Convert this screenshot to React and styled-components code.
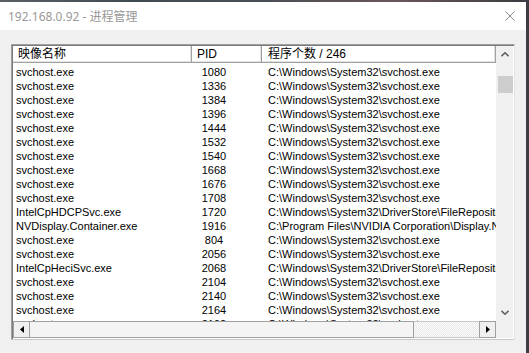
import styled, { createGlobalStyle } from 'styled-components';

const GlobalStyle = createGlobalStyle`
  html, body {
    margin: 0;
    padding: 0;
  }
  body {
    width: 529px;
    height: 353px;
    overflow: hidden;
    font-family: "Liberation Sans", "Noto Sans CJK SC", sans-serif;
  }
`;

const Desktop = styled.div`
  width: 529px;
  height: 353px;
  padding-top: 2px;
  box-sizing: border-box;
  background: linear-gradient(90deg, #5b5f64 0%, #3f4b52 25%, #4a4f56 50%, #6b5559 75%, #3a3d42 100%);
`;

const Window = styled.div`
  width: 526px;
  height: 351px;
  display: flex;
  flex-direction: column;
  background: #f0f0f0;
`;

const TitleBar = styled.div`
  height: 28px;
  flex-shrink: 0;
  background: #fff;
  display: flex;
  align-items: center;
  justify-content: space-between;
  padding: 0 11px 0 8px;
`;

const Title = styled.span`
  font-family: "Noto Sans", "Noto Sans CJK SC", sans-serif;
  font-size: 12px;
  color: #999;
`;

const Body = styled.div`
  padding: 14px 0 0 11px;
`;

const ListView = styled.div`
  width: 504px;
  height: 296px;
  box-sizing: border-box;
  padding: 1px;
  border: 1px solid #a0a0a0;
  border-right-color: #e3e3e3;
  border-bottom-color: #c8c8c8;
  box-shadow: inset 1px 1px 0 #7a7a7a;
  background: #fff;
  display: grid;
  grid-template-columns: 1fr 17px;
  grid-template-rows: 1fr 17px;
`;

const Main = styled.div`
  overflow: hidden;
  display: flex;
  flex-direction: column;
  min-width: 0;
`;

const Header = styled.div`
  display: flex;
  height: 17px;
  flex-shrink: 0;
`;

const HeadCell = styled.div`
  box-sizing: border-box;
  width: ${p => p.$w}px;
  flex: ${p => (p.$w ? '0 0 auto' : '1 1 auto')};
  height: 17px;
  padding-left: ${p => p.$pad}px;
  font-size: 12px;
  line-height: 16px;
  color: #000;
  background: #fff;
  white-space: nowrap;
  border-right: 1px solid #a0a0a0;
  border-bottom: 1px solid #a0a0a0;
  box-shadow: inset -1px -1px 0 #e3e3e3;
`;

const Rows = styled.div`
  padding-top: 2px;
`;

const Row = styled.div`
  display: flex;
  height: 14px;
  font-size: 11px;
  line-height: 14px;
  color: #000;
  white-space: nowrap;
`;

const NameCell = styled.div`
  box-sizing: border-box;
  flex: 0 0 179px;
  padding-left: 3px;
  overflow: hidden;
`;

const PidCell = styled.div`
  box-sizing: border-box;
  flex: 0 0 70px;
  padding-right: 26px;
  text-align: center;
`;

const PathCell = styled.div`
  padding-left: 6px;
`;

const VScroll = styled.div`
  grid-row: 1;
  grid-column: 2;
  background: #f0f0f0;
  display: flex;
  flex-direction: column;
`;

const VButton = styled.div`
  height: 17px;
  flex-shrink: 0;
  display: flex;
  align-items: center;
  justify-content: center;
`;

const VTrack = styled.div`
  flex: 1;
  display: flex;
  flex-direction: column;
  align-items: flex-end;
`;

const VThumb = styled.div`
  margin-top: 13px;
  width: 15px;
  height: 17px;
  background: #cdcdcd;
`;

const HScroll = styled.div`
  grid-row: 2;
  grid-column: 1;
  display: flex;
  background: #f0f0f0;
`;

const HButton = styled.div`
  box-sizing: border-box;
  flex: 0 0 17px;
  height: 17px;
  border: 1px solid #a0a0a0;
  background: #f0f0f0;
  display: flex;
  align-items: center;
  justify-content: center;
`;

const HThumb = styled.div`
  box-sizing: border-box;
  flex: 0 0 384px;
  height: 17px;
  background: #f4f4f4;
  border-top: 1px solid #a0a0a0;
  border-bottom: 1px solid #a0a0a0;
  border-right: 1px solid #a0a0a0;
`;

const HTrack = styled.div`
  box-sizing: border-box;
  flex: 1;
  height: 17px;
  border-top: 1px solid #c8c8c8;
  border-bottom: 1px solid #c8c8c8;
  background-color: #fff;
  background-image: repeating-conic-gradient(#e6e6e6 0 25%, #ffffff 0 50%);
  background-size: 2px 2px;
`;

const Corner = styled.div`
  grid-row: 2;
  grid-column: 2;
  background: #f0f0f0;
`;

const SYS = 'C:\\Windows\\System32\\svchost.exe';
const DRV = 'C:\\Windows\\System32\\DriverStore\\FileRepository\\cui_dch.inf_amd64\\';

const processes = [
  ['svchost.exe', '1080', SYS],
  ['svchost.exe', '1336', SYS],
  ['svchost.exe', '1384', SYS],
  ['svchost.exe', '1396', SYS],
  ['svchost.exe', '1444', SYS],
  ['svchost.exe', '1532', SYS],
  ['svchost.exe', '1540', SYS],
  ['svchost.exe', '1668', SYS],
  ['svchost.exe', '1676', SYS],
  ['svchost.exe', '1708', SYS],
  ['IntelCpHDCPSvc.exe', '1720', DRV + 'IntelCpHDCPSvc.exe'],
  ['NVDisplay.Container.exe', '1916', 'C:\\Program Files\\NVIDIA Corporation\\Display.NvContainer\\NVDisplay.Container.exe'],
  ['svchost.exe', '804', SYS],
  ['svchost.exe', '2056', SYS],
  ['IntelCpHeciSvc.exe', '2068', DRV + 'IntelCpHeciSvc.exe'],
  ['svchost.exe', '2104', SYS],
  ['svchost.exe', '2140', SYS],
  ['svchost.exe', '2164', SYS],
  ['svchost.exe', '2192', SYS],
  ['svchost.exe', '2200', SYS],
];

const CloseIcon = () => (
  <svg width="10" height="10" viewBox="0 0 10 10">
    <path d="M0.5 0.5 L9.5 9.5 M9.5 0.5 L0.5 9.5" stroke="#8a8a8a" strokeWidth="1" fill="none" />
  </svg>
);

const Chevron = ({ down }) => (
  <svg width="8" height="5" viewBox="0 0 8 5">
    <path
      d={down ? 'M0.5 0.8 L4 4.2 L7.5 0.8' : 'M0.5 4.2 L4 0.8 L7.5 4.2'}
      stroke="#606060"
      strokeWidth="1.6"
      fill="none"
    />
  </svg>
);

const Arrow = ({ right }) => (
  <svg width="4" height="7" viewBox="0 0 4 7">
    <path d={right ? 'M0 0 L4 3.5 L0 7 Z' : 'M4 0 L0 3.5 L4 7 Z'} fill="#000" />
  </svg>
);

export default function App() {
  return (
    <>
      <GlobalStyle />
      <Desktop>
        <Window>
          <TitleBar>
            <Title>192.168.0.92 - 进程管理</Title>
            <CloseIcon />
          </TitleBar>
          <Body>
            <ListView>
              <Main>
                <Header>
                  <HeadCell $w={179} $pad={5}>映像名称</HeadCell>
                  <HeadCell $w={70} $pad={5}>PID</HeadCell>
                  <HeadCell $pad={6}>程序个数 / 246</HeadCell>
                </Header>
                <Rows>
                  {processes.map(([name, pid, path], i) => (
                    <Row key={i}>
                      <NameCell>{name}</NameCell>
                      <PidCell>{pid}</PidCell>
                      <PathCell>{path}</PathCell>
                    </Row>
                  ))}
                </Rows>
              </Main>
              <VScroll>
                <VButton><Chevron /></VButton>
                <VTrack><VThumb /></VTrack>
                <VButton><Chevron down /></VButton>
              </VScroll>
              <HScroll>
                <HButton><Arrow /></HButton>
                <HThumb />
                <HTrack />
                <HButton><Arrow right /></HButton>
              </HScroll>
              <Corner />
            </ListView>
          </Body>
        </Window>
      </Desktop>
    </>
  );
}
